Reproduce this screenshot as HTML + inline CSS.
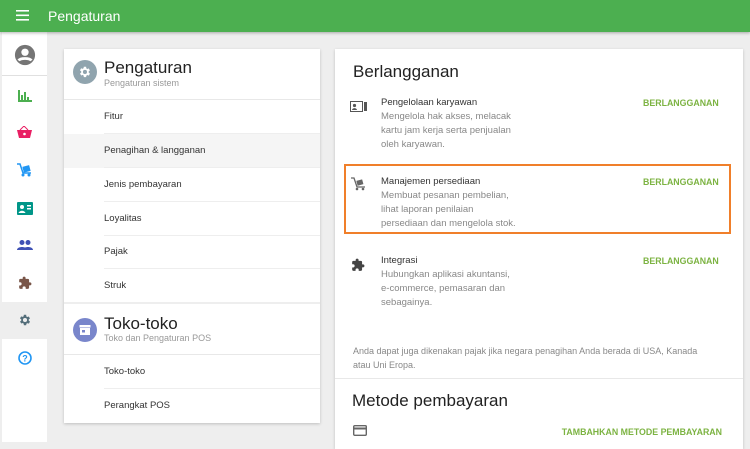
<!DOCTYPE html>
<html><head><style>
*{margin:0;padding:0;box-sizing:border-box}
body{width:750px;height:442px;overflow:hidden;background:#eeeeee;font-family:"Liberation Sans",sans-serif;position:relative}
.top{position:absolute;left:0;top:0;width:750px;height:32px;background:#4caf50;box-shadow:0 1px 3px rgba(0,0,0,.3);z-index:2}
.top .t{position:absolute;left:48px;top:8px;color:#fff;font-size:14px}
.side{position:absolute;left:2px;top:32px;width:45px;height:410px;background:#fff}
.ic{position:absolute;left:0;width:45px;display:flex;justify-content:center;align-items:center}
.card{position:absolute;background:#fff;box-shadow:0 1px 3px rgba(0,0,0,.2)}
.row{position:absolute;left:40px;right:0;height:34px;border-bottom:1px solid #eee;font-size:9.5px;color:#333;line-height:34px}
.abs{position:absolute}
.g{color:#7cb342;font-weight:bold;font-size:8.8px}
.ti{font-size:9.5px;color:#333}
.ds{font-size:9.5px;color:#888;line-height:14px}
</style></head><body>
<div class="top">
<svg class="abs" style="left:16px;top:10px" width="13" height="11"><rect y="0" width="13" height="1.6" fill="#fff"/><rect y="4.5" width="13" height="1.6" fill="#fff"/><rect y="9" width="13" height="1.6" fill="#fff"/></svg>
<div class="t">Pengaturan</div></div>
<div class="side">
<div class="ic" style="top:10px;height:26px"><svg width="22" height="22" viewBox="0 0 24 24"><circle cx="12" cy="12" r="11" fill="#757575"/><circle cx="12" cy="9" r="4" fill="#fff"/><path d="M5 18c2-3 12-3 14 0" stroke="#fff" stroke-width="3" fill="none"/></svg></div>
<div class="abs" style="left:0;top:43px;width:45px;height:1px;background:#e0e0e0"></div>
<div class="ic" style="top:56px;height:16px"><svg width="14" height="12"><rect x="0" y="0" width="2" height="12" fill="#4caf50"/><rect x="3" y="5" width="2" height="7" fill="#4caf50"/><rect x="6" y="2" width="2" height="10" fill="#4caf50"/><rect x="9" y="7" width="2" height="5" fill="#4caf50"/><rect x="0" y="10" width="14" height="2" fill="#4caf50"/></svg></div>
<div class="ic" style="top:92px;height:16px"><svg width="15" height="12"><path d="M0 4h15l-2 8H2z" fill="#e91e63"/><path d="M3 4l4-4 4 4" stroke="#e91e63" fill="none"/><circle cx="7.5" cy="8" r="1.3" fill="#fff"/></svg></div>
<div class="ic" style="top:130px;height:16px"><svg width="15" height="14"><path d="M0 1h3l3 9h8" stroke="#2196f3" stroke-width="1.5" fill="none"/><rect x="6" y="3" width="7" height="6" fill="#2196f3" transform="rotate(-15 9 6)"/><circle cx="6" cy="12" r="1.5" fill="#2196f3"/><circle cx="12" cy="12" r="1.5" fill="#2196f3"/></svg></div>
<div class="ic" style="top:168px;height:16px"><svg width="16" height="13"><rect width="16" height="13" rx="1" fill="#009688"/><circle cx="5" cy="5" r="2" fill="#fff"/><path d="M1.5 11c1-3 6-3 7 0z" fill="#fff"/><rect x="10" y="3" width="4" height="1.5" fill="#fff"/><rect x="10" y="6" width="4" height="1.5" fill="#fff"/></svg></div>
<div class="ic" style="top:205px;height:16px"><svg width="16" height="10"><circle cx="5" cy="2.5" r="2.5" fill="#3f51b5"/><circle cx="11" cy="2.5" r="2.5" fill="#3f51b5"/><path d="M0 10c0-4 10-4 10 0zM6 10c0-4 10-4 10 0z" fill="#3f51b5"/></svg></div>
<div class="ic" style="top:243px;height:16px"><svg width="14" height="14" viewBox="0 0 24 24"><path d="M20.5 11H19V7a2 2 0 0 0-2-2h-4V3.5a2.5 2.5 0 0 0-5 0V5H4a2 2 0 0 0-2 2v3.8h1.5a2.7 2.7 0 0 1 0 5.4H2V20a2 2 0 0 0 2 2h3.8v-1.5a2.7 2.7 0 0 1 5.4 0V22H17a2 2 0 0 0 2-2v-4h1.5a2.5 2.5 0 0 0 0-5z" fill="#795548"/></svg></div>
<div class="abs" style="left:0;top:270px;width:45px;height:37px;background:#eeeeee"></div>
<div class="ic" style="top:280px;height:16px"><svg width="14" height="14" viewBox="0 0 24 24"><path d="M19.4 13a7.5 7.5 0 0 0 0-2l2.1-1.6-2-3.5-2.5 1a7 7 0 0 0-1.7-1L15 3h-4l-.4 2.7a7 7 0 0 0-1.7 1l-2.5-1-2 3.5L6.6 11a7.5 7.5 0 0 0 0 2l-2.1 1.6 2 3.5 2.5-1a7 7 0 0 0 1.700 1L11 21h4l.4-2.7a7 7 0 0 0 1.7-1l2.5 1 2-3.5zM13 15.5a3.5 3.5 0 1 1 0-7 3.5 3.5 0 0 1 0 7z" fill="#546e7a" transform="translate(-1 0)"/></svg></div>
<div class="ic" style="top:318px;height:16px"><svg width="14" height="14"><circle cx="7" cy="7" r="6" stroke="#2196f3" stroke-width="1.6" fill="none"/><text x="7" y="10.5" font-size="9" font-weight="bold" text-anchor="middle" fill="#2196f3" font-family="Liberation Sans">?</text></svg></div>
</div>

<div class="card" style="left:64px;top:49px;width:256px;height:374px">
<svg class="abs" style="left:9px;top:11px" width="24" height="24" viewBox="0 0 24 24"><circle cx="12" cy="12" r="12" fill="#90a4ae"/><g transform="translate(5 5) scale(.58)"><path d="M19.4 13a7.5 7.5 0 0 0 0-2l2.1-1.6-2-3.5-2.5 1a7 7 0 0 0-1.7-1L15 3h-4l-.4 2.7a7 7 0 0 0-1.7 1l-2.5-1-2 3.5L6.6 11a7.5 7.5 0 0 0 0 2l-2.1 1.6 2 3.5 2.5-1a7 7 0 0 0 1.7 1L11 21h4l.4-2.7a7 7 0 0 0 1.7-1l2.5 1 2-3.5zM13 15.5a3.5 3.5 0 1 1 0-7 3.5 3.5 0 0 1 0 7z" fill="#fff" transform="translate(-1 0)"/></g></svg>
<div class="abs" style="left:40px;top:9px;font-size:17px;color:#222">Pengaturan</div>
<div class="abs" style="left:40px;top:29px;font-size:9px;color:#999">Pengaturan sistem</div>
<div class="abs" style="left:0;top:50px;width:256px;height:1px;background:#e8e8e8"></div>
<div class="row" style="top:51px">Fitur</div>
<div class="abs" style="left:0;top:85px;width:256px;height:34px;background:#f5f5f5"></div>
<div class="row" style="top:85px">Penagihan &amp; langganan</div>
<div class="row" style="top:119px">Jenis pembayaran</div>
<div class="row" style="top:153px">Loyalitas</div>
<div class="row" style="top:186px">Pajak</div>
<div class="row" style="top:220px;border-bottom:none">Struk</div>
<div class="abs" style="left:0;top:253px;width:256px;height:2px;background:#eee"></div>
<svg class="abs" style="left:9px;top:269px" width="24" height="24"><circle cx="12" cy="12" r="12" fill="#7986cb"/><rect x="6.5" y="7" width="11" height="2.5" fill="#fff"/><rect x="7" y="10" width="10" height="7" fill="#fff"/><rect x="9" y="12" width="3" height="2.5" fill="#7986cb"/></svg>
<div class="abs" style="left:40px;top:265px;font-size:17px;color:#222">Toko-toko</div>
<div class="abs" style="left:40px;top:284px;font-size:9px;color:#999">Toko dan Pengaturan POS</div>
<div class="abs" style="left:0;top:305px;width:256px;height:1px;background:#e8e8e8"></div>
<div class="row" style="top:306px">Toko-toko</div>
<div class="row" style="top:340px;border-bottom:none">Perangkat POS</div>
</div>

<div class="card" style="left:335px;top:49px;width:408px;height:400px">
<div class="abs" style="left:18px;top:13px;font-size:17px;color:#222">Berlangganan</div>
<svg class="abs" style="left:15px;top:52px" width="17" height="12"><rect x=".5" y=".5" width="12" height="10" fill="none" stroke="#555"/><circle cx="4.5" cy="4.5" r="1.6" fill="#555"/><path d="M2 9c.5-2.5 4.5-2.5 5 0z" fill="#555"/><rect x="14" y="1" width="3" height="9" fill="#555"/></svg>
<div class="abs ti" style="left:46px;top:48px">Pengelolaan karyawan</div>
<div class="abs ds" style="left:46px;top:61px">Mengelola hak akses, melacak<br>kartu jam kerja serta penjualan<br>oleh karyawan.</div>
<div class="abs g" style="left:308px;top:49px">BERLANGGANAN</div>
<div class="abs" style="left:9px;top:115px;width:387px;height:70px;border:2px solid #f07f2a"></div>
<svg class="abs" style="left:16px;top:128px" width="15" height="14"><path d="M0 1h3l3 9h8" stroke="#666" stroke-width="1.3" fill="none"/><rect x="6" y="3" width="6" height="5" fill="#666" transform="rotate(-15 9 6)"/><circle cx="6" cy="12" r="1.3" fill="#666"/><circle cx="12" cy="12" r="1.3" fill="#666"/></svg>
<div class="abs ti" style="left:46px;top:127px">Manajemen persediaan</div>
<div class="abs ds" style="left:46px;top:140px">Membuat pesanan pembelian,<br>lihat laporan penilaian<br>persediaan dan mengelola stok.</div>
<div class="abs g" style="left:308px;top:128px">BERLANGGANAN</div>
<svg class="abs" style="left:16px;top:209px" width="14" height="14" viewBox="0 0 24 24"><path d="M20.5 11H19V7a2 2 0 0 0-2-2h-4V3.5a2.5 2.5 0 0 0-5 0V5H4a2 2 0 0 0-2 2v3.8h1.5a2.7 2.7 0 0 1 0 5.4H2V20a2 2 0 0 0 2 2h3.8v-1.5a2.7 2.7 0 0 1 5.4 0V22H17a2 2 0 0 0 2-2v-4h1.5a2.5 2.5 0 0 0 0-5z" fill="#444"/></svg>
<div class="abs ti" style="left:46px;top:206px">Integrasi</div>
<div class="abs ds" style="left:46px;top:219px">Hubungkan aplikasi akuntansi,<br>e-commerce, pemasaran dan<br>sebagainya.</div>
<div class="abs g" style="left:308px;top:207px">BERLANGGANAN</div>
<div class="abs ds" style="left:18px;top:295px;font-size:9px">Anda dapat juga dikenakan pajak jika negara penagihan Anda berada di USA, Kanada<br>atau Uni Eropa.</div>
<div class="abs" style="left:0;top:329px;width:408px;height:1px;background:#e8e8e8"></div>
<div class="abs" style="left:17px;top:342px;font-size:17px;color:#222">Metode pembayaran</div>
<svg class="abs" style="left:18px;top:376px" width="14" height="11"><rect x=".7" y=".7" width="12.6" height="9.6" rx="1" fill="none" stroke="#666" stroke-width="1.4"/><rect x="1" y="2.5" width="12" height="2" fill="#666"/></svg>
<div class="abs g" style="right:21px;top:378px">TAMBAHKAN METODE PEMBAYARAN</div>
</div>
</body></html>
